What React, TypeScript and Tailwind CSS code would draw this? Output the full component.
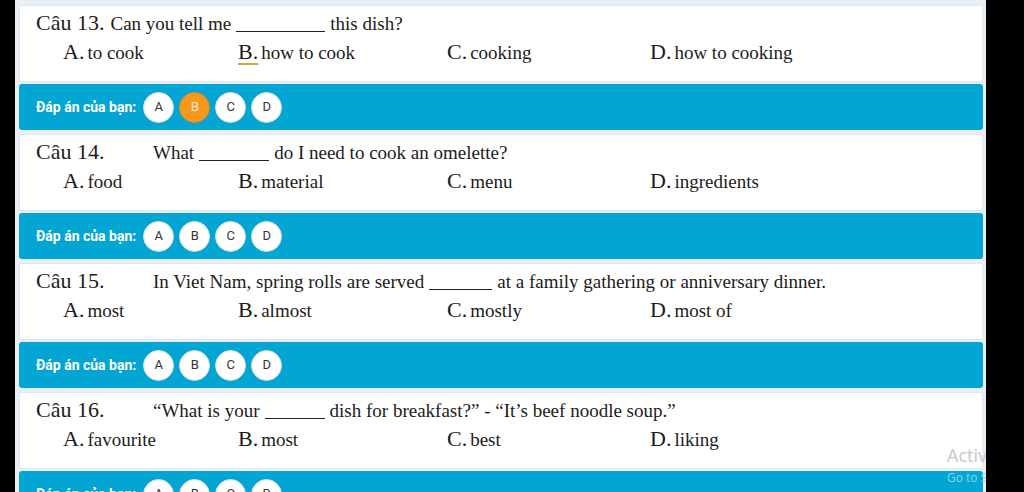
import React from 'react';

type Part = string | number;

type Question = {
  num: number;
  inline: boolean;
  parts: Part[];
  options: string[];
  selected?: string;
  marked?: string;
};

const questions: Question[] = [
  {
    num: 13,
    inline: true,
    parts: ['Can you tell me', 89, 'this dish?'],
    options: ['to cook', 'how to cook', 'cooking', 'how to cooking'],
    selected: 'B',
    marked: 'B',
  },
  {
    num: 14,
    inline: false,
    parts: ['What', 70, 'do I need to cook an omelette?'],
    options: ['food', 'material', 'menu', 'ingredients'],
  },
  {
    num: 15,
    inline: false,
    parts: ['In Viet Nam, spring rolls are served', 63, 'at a family gathering or anniversary dinner.'],
    options: ['most', 'almost', 'mostly', 'most of'],
  },
  {
    num: 16,
    inline: false,
    parts: ['\u201cWhat is your', 60, 'dish for breakfast?\u201d - \u201cIt\u2019s beef noodle soup.\u201d'],
    options: ['favourite', 'most', 'best', 'liking'],
  },
];

const letters = ['A', 'B', 'C', 'D'];

const Blank = ({ w }: { w: number }) => (
  <span
    className="inline-block border-b border-[#222] relative top-[2px] mx-[5px]"
    style={{ width: w }}
  />
);

const QuestionCard = ({ q }: { q: Question }) => (
  <div className="h-[77px] shrink-0 bg-white border border-[#dfe7ef] rounded-[2px] pl-[16px] pt-[2px] text-[#1c1c1c]">
    <div className="flex items-baseline leading-[29px] whitespace-nowrap">
      <span className={q.inline ? 'text-[22px] mr-[6px]' : 'text-[22px] w-[117px] shrink-0'}>Câu {q.num}.</span>
      {q.parts.map((p, i) =>
        typeof p === 'number' ? (
          <Blank key={i} w={p} />
        ) : (
          <span key={i} className="text-[19px]">{p}</span>
        )
      )}
    </div>
    <div className="grid grid-cols-[175px_209px_203px_1fr] items-baseline leading-[28px] pl-[27px] whitespace-nowrap">
      {q.options.map((opt, i) => (
        <div key={i} className="flex items-baseline">
          <span
            className={
              q.marked === letters[i]
                ? 'text-[22px] underline decoration-[#d9a13b] decoration-2 underline-offset-[4px]'
                : 'text-[22px]'
            }
          >
            {letters[i]}.
          </span>
          <span className="text-[19px] ml-[3px]">{opt}</span>
        </div>
      ))}
    </div>
  </div>
);

const AnswerBar = ({ selected }: { selected?: string }) => (
  <div className="h-[46px] shrink-0 mt-[2px] bg-[#03a6d3] rounded-[3px] flex items-center pl-[17px] font-['Roboto',sans-serif]">
    <span className="text-white text-[14px] font-bold mr-[7px]">Đáp án của bạn:</span>
    <div className="flex gap-[5px]">
      {letters.map((l) => (
        <div
          key={l}
          className={
            selected === l
              ? 'w-[31px] h-[31px] rounded-full bg-[#f39a1e] border border-[#e08a12] flex items-center justify-center text-[13px] text-[#fde7c8]'
              : 'w-[31px] h-[31px] rounded-full bg-white border border-[#d6dde3] flex items-center justify-center text-[13px] text-[#333]'
          }
        >
          {l}
        </div>
      ))}
    </div>
  </div>
);

export default function App() {
  return (
    <div className="w-[1024px] h-[492px] overflow-hidden bg-black flex font-['Liberation_Serif',serif]">
      <div className="w-[15px] shrink-0" />
      <div className="relative w-[971px] h-full shrink-0 overflow-hidden bg-[#e9eff5] pl-[4px] pr-[3px] pt-[5px] flex flex-col">
        {questions.map((q) => (
          <React.Fragment key={q.num}>
            <QuestionCard q={q} />
            <AnswerBar selected={q.selected} />
            <div className="h-[4px] shrink-0" />
          </React.Fragment>
        ))}
        <div className="absolute left-[932px] top-[446px] font-['Open_Sans',sans-serif] leading-none whitespace-nowrap">
          <div className="text-[18px] text-[#c6c6c6]">Activate Windows</div>
          <div className="text-[12px] text-[#8fd2e8] mt-[8px]">Go to Settings</div>
        </div>
      </div>
    </div>
  );
}
